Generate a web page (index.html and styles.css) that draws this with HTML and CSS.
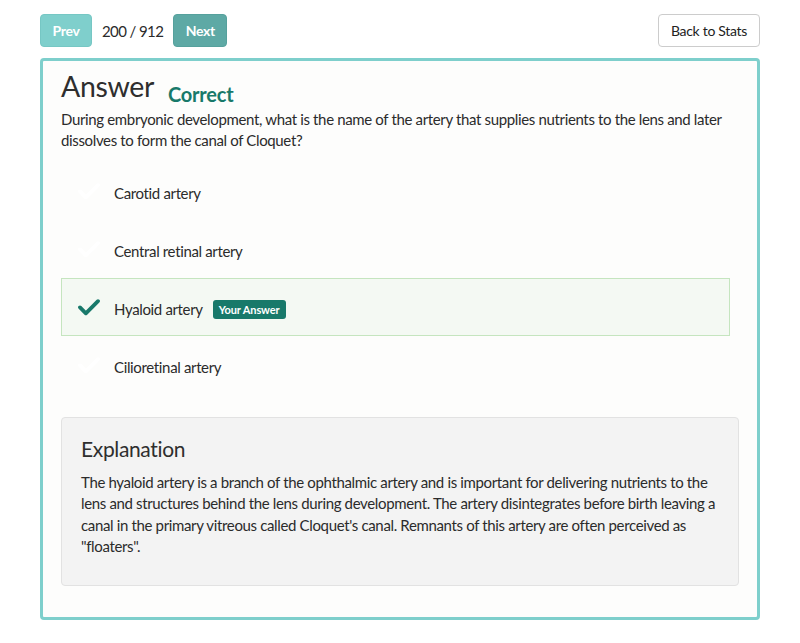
FILE: index.html
```html
<!DOCTYPE html>
<html>
<head>
<meta charset="utf-8">
<link rel="stylesheet" href="styles.css">
</head>
<body>
<div class="page">
  <div class="topbar">
    <div class="nav">
      <button class="btn btn-prev">Prev</button>
      <span class="count">200 / 912</span>
      <button class="btn btn-next">Next</button>
    </div>
    <button class="btn btn-back">Back to Stats</button>
  </div>
  <div class="card">
    <div class="title-row">
      <h1 class="title">Answer</h1>
      <span class="status">Correct</span>
    </div>
    <p class="question">During embryonic development, what is the name of the artery that supplies nutrients to the lens and later dissolves to form the canal of Cloquet?</p>
    <ul class="options">
      <li class="option"><span class="check faint"><svg viewBox="0 0 24 20" width="22" height="18"><path d="M2 10.5 L8.5 17 L22 3.5" fill="none" stroke="currentColor" stroke-width="4.2" stroke-linecap="round" stroke-linejoin="round"/></svg></span><span class="label">Carotid artery</span></li>
      <li class="option"><span class="check faint"><svg viewBox="0 0 24 20" width="22" height="18"><path d="M2 10.5 L8.5 17 L22 3.5" fill="none" stroke="currentColor" stroke-width="4.2" stroke-linecap="round" stroke-linejoin="round"/></svg></span><span class="label">Central retinal artery</span></li>
      <li class="option selected"><span class="check"><svg viewBox="0 0 24 20" width="22" height="18"><path d="M2 10.5 L8.5 17 L22 3.5" fill="none" stroke="currentColor" stroke-width="4.2" stroke-linecap="round" stroke-linejoin="round"/></svg></span><span class="label">Hyaloid artery</span><span class="badge">Your Answer</span></li>
      <li class="option"><span class="check faint"><svg viewBox="0 0 24 20" width="22" height="18"><path d="M2 10.5 L8.5 17 L22 3.5" fill="none" stroke="currentColor" stroke-width="4.2" stroke-linecap="round" stroke-linejoin="round"/></svg></span><span class="label">Cilioretinal artery</span></li>
    </ul>
    <div class="explain">
      <h2 class="explain-title">Explanation</h2>
      <p class="explain-text">The hyaloid artery is a branch of the ophthalmic artery and is important for delivering nutrients to the lens and structures behind the lens during development. The artery disintegrates before birth leaving a canal in the primary vitreous called Cloquet's canal. Remnants of this artery are often perceived as "floaters".</p>
    </div>
  </div>
</div>
</body>
</html>
```

FILE: styles.css
```css
* { box-sizing: border-box; }
html, body { margin: 0; padding: 0; background: #ffffff; }
body {
  font-family: "Lato", "Open Sans", sans-serif;
  color: #2b2b2b;
  font-size: 15px;
  letter-spacing: -0.35px;
}
.page {
  width: 720px;
  margin: 0 auto;
  padding-top: 14px;
}
.topbar {
  display: flex;
  justify-content: space-between;
  align-items: center;
  height: 33px;
}
.nav {
  display: flex;
  align-items: center;
  gap: 10px;
}
.btn {
  font-family: inherit;
  letter-spacing: -0.3px;
  height: 33px;
  border-radius: 4px;
  font-size: 14px;
  padding: 0;
  border: 1px solid transparent;
  cursor: pointer;
}
.btn-prev {
  background: #7fcfcc;
  border-color: #76c7c4;
  color: #ffffff;
  font-weight: 700;
  width: 52px;
}
.btn-next {
  background: #5ea9a5;
  border-color: #56a19d;
  color: #ffffff;
  font-weight: 700;
  width: 54px;
}
.count {
  font-size: 15px;
  letter-spacing: -0.6px;
  color: #2b2b2b;
}
.btn-back {
  background: #ffffff;
  border-color: #cccccc;
  color: #222;
  width: 102px;
}
.card {
  margin-top: 11px;
  border: 3px solid #7ecfcc;
  border-radius: 4px;
  background: #fdfdfc;
  padding: 5px 18px 31px 18px;
}
.title-row {
  display: flex;
  align-items: baseline;
  gap: 14px;
}
.title {
  margin: 0;
  font-size: 28.5px;
  font-weight: 400;
  line-height: 40px;
  color: #2e2e2e;
}
.status {
  font-size: 20px;
  font-weight: 700;
  color: #18796a;
  letter-spacing: -0.2px;
  position: relative;
  top: 5px;
}
.question {
  margin: 3px 0 0 0;
  line-height: 21px;
  font-size: 15px;
}
.options {
  list-style: none;
  margin: 11px 9px 0 0;
  padding: 0;
}
.option {
  display: flex;
  align-items: center;
  height: 58px;
  border: 1px solid transparent;
  padding-left: 16px;
}
.option .label { position: relative; top: 2px; }
.option.selected {
  background: #f4f9f3;
  border-color: #c5e5bf;
}
.check {
  display: inline-flex;
  width: 36px;
  color: #18796a;
}
.check.faint { color: #ffffff; }
.label { font-size: 15px; }
.badge {
  margin-left: 10px;
  background: #18796a;
  color: #fff;
  font-size: 11px;
  font-weight: 700;
  letter-spacing: -0.1px;
  padding: 3px 6px;
  border-radius: 3px;
  line-height: 13px;
  position: relative;
  top: 2px;
}
.explain {
  margin-top: 23px;
  background: #f3f3f3;
  border: 1px solid #e2e2e2;
  border-radius: 4px;
  padding: 17px 19px 18px 19px;
}
.explain-title {
  margin: 0 0 9px 0;
  font-size: 21px;
  font-weight: 400;
  line-height: 28px;
  color: #2e2e2e;
}
.explain-text {
  margin: 0 0 10px 0;
  line-height: 21.3px;
  font-size: 15px;
}
```
